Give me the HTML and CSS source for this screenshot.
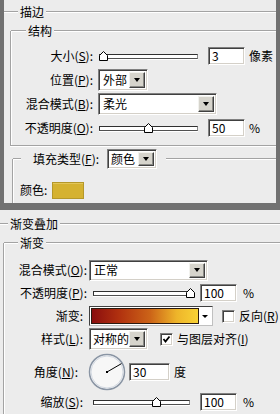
FILE: index.html
```html
<!DOCTYPE html>
<html lang="zh-CN">
<head>
<meta charset="utf-8">
<title>图层样式</title>
<link rel="stylesheet" href="styles.css">
</head>
<body>
<div class="stroke-panel">
  <div class="title-row top-title">
    <span class="seg seg-top"></span><span class="ttl">描边</span><span class="line"></span>
  </div>
  <div class="group g-struct">
    <div class="legend">
      <span class="seg seg-struct"></span><span class="ttl">结构</span><span class="line"></span>
    </div>
    <div class="row r24 first-row">
      <span class="lbl w82">大小(<u>S</u>):</span>
      <div class="slider w99 ml6"><svg class="thumb" style="left:4px" width="9" height="10" viewBox="0 0 9 10"><polygon points="0.5,9.5 0.5,4.5 4.5,0.5 8.5,4.5 8.5,9.5" fill="#fff" stroke="#000"/></svg></div>
      <div class="field w37 ml10">3</div>
      <span class="unit">像素</span>
    </div>
    <div class="row r24">
      <span class="lbl w82">位置(<u>P</u>):</span>
      <div class="combo cw50 ml5"><span class="combo-text">外部</span><span class="combo-btn"><i class="tri"></i></span></div>
    </div>
    <div class="row r24">
      <span class="lbl w82">混合模式(<u>B</u>):</span>
      <div class="combo cw119 ml5"><span class="combo-text">柔光</span><span class="combo-btn"><i class="tri"></i></span></div>
    </div>
    <div class="row r24">
      <span class="lbl w82">不透明度(<u>O</u>):</span>
      <div class="slider w99 ml6"><svg class="thumb" style="left:50%" width="9" height="10" viewBox="0 0 9 10"><polygon points="0.5,9.5 0.5,4.5 4.5,0.5 8.5,4.5 8.5,9.5" fill="#fff" stroke="#000"/></svg></div>
      <div class="field w37 ml10">50</div>
      <span class="unit">%</span>
    </div>
  </div>
  <div class="group g-fill">
    <div class="legend legend-fill">
      <span class="seg seg-fill"></span>
      <span class="lbl-left fill-lbl">填充类型(<u>F</u>):</span>
      <div class="combo cw50 h20"><span class="combo-text tight">颜色</span><span class="combo-btn"><i class="tri"></i></span></div>
      <span class="line ml9"></span>
    </div>
    <div class="row color-row">
      <span class="lbl-left color-lbl">颜色:</span>
      <span class="swatch"></span>
    </div>
  </div>
</div>

<div class="grad-panel">
  <div class="title-row bottom-title">
    <span class="seg seg-8"></span><span class="ttl">渐变叠加</span><span class="line"></span>
  </div>
  <div class="group g-grad">
    <div class="legend">
      <span class="seg seg-14"></span><span class="ttl">渐变</span><span class="line"></span>
    </div>
    <div class="row r22 grad-first">
      <span class="lbl w83">混合模式(<u>O</u>):</span>
      <div class="combo cw119 h21 ml2"><span class="combo-text">正常</span><span class="combo-btn"><i class="tri"></i></span></div>
    </div>
    <div class="row r24">
      <span class="lbl w83">不透明度(<u>P</u>):</span>
      <div class="slider w99 ml6"><svg class="thumb" style="left:100%" width="9" height="10" viewBox="0 0 9 10"><polygon points="0.5,9.5 0.5,4.5 4.5,0.5 8.5,4.5 8.5,9.5" fill="#fff" stroke="#000"/></svg></div>
      <div class="field w37 ml8">100</div>
      <span class="unit ml6">%</span>
    </div>
    <div class="row r22">
      <span class="lbl w79">渐变:</span>
      <div class="grad ml6"><span class="grad-fill"></span><span class="grad-btn"><i class="tri tri-small"></i></span></div>
      <span class="chk ml9"></span>
      <span class="chk-text">反向(<u>R</u>)</span>
    </div>
    <div class="row r24">
      <span class="lbl w79">样式(<u>L</u>):</span>
      <div class="combo cw59 ml6"><span class="combo-text tight">对称的</span><span class="combo-btn"><i class="tri"></i></span></div>
      <span class="chk ml12"><svg width="9" height="9" viewBox="0 0 9 9"><polyline points="1.5,4 3.5,6.5 7.5,1.5" fill="none" stroke="#000" stroke-width="1.8"/></svg></span>
      <span class="chk-text">与图层对齐(<u>I</u>)</span>
    </div>
    <div class="row r42">
      <span class="lbl w74">角度(<u>N</u>):</span>
      <svg class="dial ml10" width="38" height="38" viewBox="0 0 38 38">
        <circle cx="19" cy="19" r="17.5" fill="#f7f7f7" stroke="#8a95a4" stroke-width="1.5"/>
        <circle cx="19" cy="19" r="16" fill="none" stroke="#d3d9e2" stroke-width="1"/>
        <line x1="19" y1="19" x2="33.5" y2="10.6" stroke="#000" stroke-width="1"/>
        <rect x="18" y="18" width="2" height="2" fill="#000"/>
      </svg>
      <div class="field w41 ml3">30</div>
      <span class="unit">度</span>
    </div>
    <div class="row r18">
      <span class="lbl w79">缩放(<u>S</u>):</span>
      <div class="slider w97 ml10"><svg class="thumb" style="left:66%" width="9" height="10" viewBox="0 0 9 10"><polygon points="0.5,9.5 0.5,4.5 4.5,0.5 8.5,4.5 8.5,9.5" fill="#fff" stroke="#000"/></svg></div>
      <div class="field w37 ml10">100</div>
      <span class="unit ml6">%</span>
    </div>
  </div>
</div>
</body>
</html>
```

FILE: styles.css
```css
html, body {
  margin: 0;
  padding: 0;
}
body {
  width: 280px;
  height: 414px;
  overflow: hidden;
  background: #ececec;
  color: #000;
  font-family: "Noto Sans CJK SC", "DejaVu Sans", sans-serif;
  font-size: 12px;
  line-height: 14px;
}
u {
  text-decoration: underline;
  text-underline-offset: 1px;
}

/* panels */
.stroke-panel {
  height: 210px;
  box-sizing: border-box;
  border-left: 4px solid #717171;
  border-right: 4px solid #717171;
  border-bottom: 7px solid #717171;
  display: flex;
  flex-direction: column;
}
.grad-panel {
  height: 204px;
  display: flex;
  flex-direction: column;
}

/* etched lines */
.title-row, .legend {
  display: flex;
  align-items: center;
  height: 14px;
  flex: none;
}
.top-title { margin-top: 5px; }
.bottom-title { margin-top: 7px; }
.seg, .line {
  height: 0;
  border-top: 1px solid #a3a3a3;
  border-bottom: 1px solid #fff;
}
.line { flex: 1; margin-left: 2px; }
.seg { flex: none; margin-right: 2px; }
.seg-top { width: 14px; }
.seg-struct { width: 15px; }
.seg-8 { width: 8px; }
.seg-14 { width: 14px; }
.seg-fill { width: 8px; margin-right: 0; }
.ttl { white-space: nowrap; }

/* group boxes */
.group {
  display: flex;
  flex-direction: column;
  border-left: 1px solid #a3a3a3;
  box-shadow: inset 1px 0 #fff;
}
.legend { margin-top: -7px; }
.g-struct {
  margin-left: 6px;
  margin-top: 12px;
  padding-bottom: 5px;
  border-bottom: 1px solid #a3a3a3;
  box-shadow: inset 1px 0 #fff, 0 1px #fff;
}
.g-fill {
  margin-left: 8px;
  margin-top: 13px;
  flex: 1;
}
.legend-fill {
  height: 22px;
  margin-top: -11px;
}
.g-grad {
  margin-left: 3px;
  margin-top: 12px;
  flex: 1;
}

/* rows */
.row {
  display: flex;
  align-items: center;
  flex: none;
}
.r18 { height: 18px; }
.r22 { height: 22px; }
.r24 { height: 24px; }
.r42 { height: 42px; }
.first-row { margin-top: 6px; }
.grad-first { margin-top: 9px; }
.color-row { margin-top: 10px; height: 20px; }

.lbl {
  flex: none;
  text-align: right;
  white-space: nowrap;
}
.lbl-left { flex: none; white-space: nowrap; }
.w74 { width: 74px; }
.w79 { width: 79px; }
.w82 { width: 82px; }
.w83 { width: 83px; }
.fill-lbl { margin-left: 12px; width: 74px; }
.color-lbl { margin-left: 7px; width: 32px; }

.ml2 { margin-left: 2px; }
.ml3 { margin-left: 3px; }
.ml5 { margin-left: 5px; }
.ml6 { margin-left: 6px; }
.ml8 { margin-left: 8px; }
.ml9 { margin-left: 9px; }
.ml10 { margin-left: 10px; }
.ml12 { margin-left: 12px; }

.unit { margin-left: 4px; white-space: nowrap; }
.unit.ml6 { margin-left: 6px; }

/* text field */
.field {
  flex: none;
  height: 18px;
  box-sizing: border-box;
  background: #fff;
  border: 1px solid;
  border-color: #808080 #fff #fff #808080;
  box-shadow: inset 1px 1px #404040, inset -1px -1px #d4d0c8;
  padding-left: 3px;
  line-height: 16px;
}
.w37 { width: 37px; }
.w41 { width: 41px; }

/* combo box */
.combo {
  flex: none;
  display: flex;
  height: 22px;
  box-sizing: border-box;
  background: #fff;
  border: 1px solid;
  border-color: #808080 #fff #fff #808080;
  box-shadow: inset 1px 1px #404040, inset -1px -1px #d4d0c8;
  padding: 2px;
}
.h20 { height: 20px; }
.h21 { height: 21px; }
.cw50 { width: 50px; }
.cw59 { width: 59px; }
.cw119 { width: 119px; }
.combo-text {
  flex: 1;
  min-width: 0;
  padding-left: 2px;
  display: flex;
  align-items: center;
  white-space: nowrap;
}
.combo-text.tight { padding-left: 1px; }
.combo-btn {
  flex: none;
  width: 16px;
  box-sizing: border-box;
  background: #d6d4cc;
  border: 1px solid;
  border-color: #f2f2ee #404040 #404040 #f2f2ee;
  box-shadow: inset -1px -1px #8a8a86;
  display: flex;
  align-items: center;
  justify-content: center;
}
.tri {
  display: block;
  width: 0;
  height: 0;
  border-left: 3.5px solid transparent;
  border-right: 3.5px solid transparent;
  border-top: 4px solid #000;
}
.tri-small {
  border-left-width: 3px;
  border-right-width: 3px;
  border-top-width: 3px;
}

/* slider */
.slider {
  flex: none;
  position: relative;
  height: 5px;
  box-sizing: border-box;
  background: #fff;
  border: 1px solid;
  border-color: #303030 #8a8a8a #505050 #303030;
  box-shadow: 0 1px #fff;
}
.w97 { width: 97px; }
.w99 { width: 99px; }
.thumb {
  position: absolute;
  top: -4px;
  margin-left: -5px;
  display: block;
}

/* swatch */
.swatch {
  flex: none;
  width: 32px;
  height: 17px;
  box-sizing: border-box;
  background: #d5b231;
  border: 1px solid #b5982a;
  box-shadow: inset 0 1px #e2c65a;
}

/* gradient picker */
.grad {
  flex: none;
  display: flex;
  width: 124px;
  height: 20px;
  box-sizing: border-box;
  border: 1px solid;
  border-color: #404040 #c0c0c0 #c0c0c0 #404040;
  padding: 1px;
  background: #fff;
}
.grad-fill {
  flex: 1;
  background: linear-gradient(to right, #8a0e0e 0%, #b0300f 25%, #cc6418 55%, #eeb52a 80%, #f8d235 100%);
  border: 1px solid #2a1a10;
}
.grad-btn {
  flex: none;
  width: 12px;
  background: #fff;
  display: flex;
  align-items: center;
  justify-content: center;
}

/* checkbox */
.chk {
  flex: none;
  width: 13px;
  height: 13px;
  box-sizing: border-box;
  background: #fff;
  border: 1px solid;
  border-color: #808080 #fff #fff #808080;
  box-shadow: inset 1px 1px #404040, inset -1px -1px #d4d0c8;
  display: flex;
  align-items: center;
  justify-content: center;
}
.chk svg { display: block; }
.chk-text { margin-left: 4px; white-space: nowrap; }

.dial { flex: none; display: block; }
```
